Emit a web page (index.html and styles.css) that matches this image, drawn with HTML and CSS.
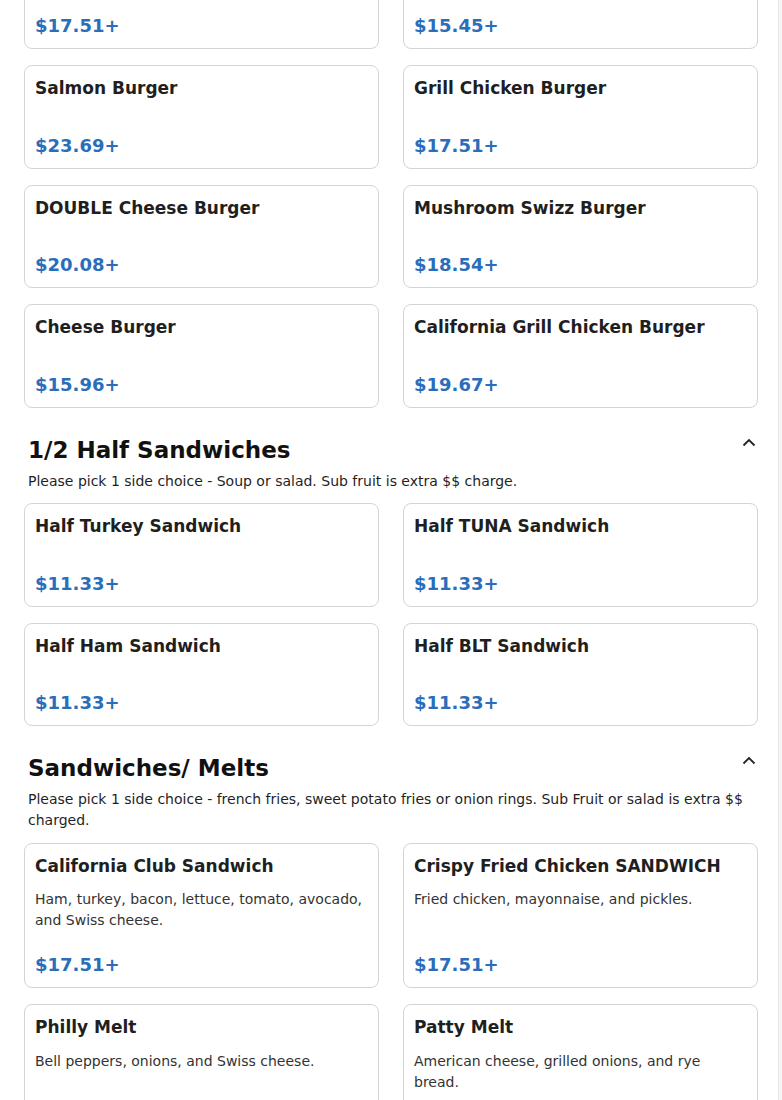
FILE: index.html
```html
<!DOCTYPE html>
<html>
<head>
  <title>Menu</title>
  <link rel="stylesheet" href="styles.css">
</head>
<body>
  <div class="page">
    <main class="menu">
      <!-- Burgers (scrolled partly out of view) -->
      <div class="item-grid first-grid">
        <div class="item-card">
          <div class="item-name">Bacon Burger</div>
          <div class="item-desc"></div>
          <div class="item-price">$17.51+</div>
        </div>
        <div class="item-card">
          <div class="item-name">Classic Burger</div>
          <div class="item-desc"></div>
          <div class="item-price">$15.45+</div>
        </div>
        <div class="item-card">
          <div class="item-name">Salmon Burger</div>
          <div class="item-desc"></div>
          <div class="item-price">$23.69+</div>
        </div>
        <div class="item-card">
          <div class="item-name">Grill Chicken Burger</div>
          <div class="item-desc"></div>
          <div class="item-price">$17.51+</div>
        </div>
        <div class="item-card">
          <div class="item-name">DOUBLE Cheese Burger</div>
          <div class="item-desc"></div>
          <div class="item-price">$20.08+</div>
        </div>
        <div class="item-card">
          <div class="item-name">Mushroom Swizz Burger</div>
          <div class="item-desc"></div>
          <div class="item-price">$18.54+</div>
        </div>
        <div class="item-card">
          <div class="item-name">Cheese Burger</div>
          <div class="item-desc"></div>
          <div class="item-price">$15.96+</div>
        </div>
        <div class="item-card">
          <div class="item-name">California Grill Chicken Burger</div>
          <div class="item-desc"></div>
          <div class="item-price">$19.67+</div>
        </div>
      </div>

      <section class="menu-section">
        <div class="section-head">
          <h2>1/2 Half Sandwiches</h2>
          <svg class="chevron" width="14" height="9" viewBox="0 0 14 9"><path d="M1.5 7.5 L7 2 L12.5 7.5" fill="none" stroke="#222" stroke-width="1.8"/></svg>
        </div>
        <p class="section-note">Please pick 1 side choice - Soup or salad. Sub fruit is extra $$ charge.</p>
        <div class="item-grid">
          <div class="item-card">
            <div class="item-name">Half Turkey Sandwich</div>
            <div class="item-desc"></div>
            <div class="item-price">$11.33+</div>
          </div>
          <div class="item-card">
            <div class="item-name">Half TUNA Sandwich</div>
            <div class="item-desc"></div>
            <div class="item-price">$11.33+</div>
          </div>
          <div class="item-card">
            <div class="item-name">Half Ham Sandwich</div>
            <div class="item-desc"></div>
            <div class="item-price">$11.33+</div>
          </div>
          <div class="item-card">
            <div class="item-name">Half BLT Sandwich</div>
            <div class="item-desc"></div>
            <div class="item-price">$11.33+</div>
          </div>
        </div>
      </section>

      <section class="menu-section">
        <div class="section-head">
          <h2>Sandwiches/ Melts</h2>
          <svg class="chevron" width="14" height="9" viewBox="0 0 14 9"><path d="M1.5 7.5 L7 2 L12.5 7.5" fill="none" stroke="#222" stroke-width="1.8"/></svg>
        </div>
        <p class="section-note">Please pick 1 side choice - french fries, sweet potato fries or onion rings. Sub Fruit or salad is extra $$ charged.</p>
        <div class="item-grid">
          <div class="item-card">
            <div class="item-name">California Club Sandwich</div>
            <div class="item-desc">Ham, turkey, bacon, lettuce, tomato, avocado, and Swiss cheese.</div>
            <div class="item-price">$17.51+</div>
          </div>
          <div class="item-card">
            <div class="item-name">Crispy Fried Chicken SANDWICH</div>
            <div class="item-desc">Fried chicken, mayonnaise, and pickles.</div>
            <div class="item-price">$17.51+</div>
          </div>
          <div class="item-card">
            <div class="item-name">Philly Melt</div>
            <div class="item-desc">Bell peppers, onions, and Swiss cheese.</div>
            <div class="item-price">$17.51+</div>
          </div>
          <div class="item-card">
            <div class="item-name">Patty Melt</div>
            <div class="item-desc">American cheese, grilled onions, and rye bread.</div>
            <div class="item-price">$17.51+</div>
          </div>
        </div>
      </section>
    </main>
    <aside class="side-strip"></aside>
  </div>
</body>
</html>
```

FILE: styles.css
```css
body {
  font-family: 'DejaVu Sans', Verdana, sans-serif;
  background-color: #fff;
  color: #1f1f1f;
  margin: 0;
  overflow: hidden;
}

.page {
  display: flex;
  min-height: 100vh;
}

.menu {
  width: 734px;
  padding: 0 20px 0 24px;
}

.side-strip {
  flex: 1;
  border-left: 1px solid #e6e6e6;
  background-color: #f6f6f6;
}

.first-grid {
  margin-top: -54.5px;
}

.item-grid {
  display: grid;
  grid-template-columns: 1fr 1fr;
  column-gap: 24px;
  row-gap: 16px;
}

.item-card {
  display: flex;
  flex-direction: column;
  border: 1px solid #d4d4d4;
  border-radius: 8px;
  padding: 10px 10px 9px;
  background-color: #fff;
}

.item-name {
  font-size: 17px;
  font-weight: bold;
  line-height: 25.5px;
  margin-bottom: 10px;
}

.item-desc {
  font-size: 14px;
  line-height: 21px;
  color: #333;
  margin-bottom: 20px;
}

.item-price {
  margin-top: auto;
  font-size: 18px;
  font-weight: bold;
  line-height: 27px;
  color: #2a6ebb;
}

.menu-section {
  margin-top: 25px;
}

.section-head {
  display: flex;
  justify-content: space-between;
  align-items: flex-start;
  padding: 0 2px 0 4px;
}

.section-head h2 {
  margin: 0;
  font-size: 23px;
  line-height: 35px;
  color: #111;
}

.chevron {
  margin-top: 5px;
}

.section-note {
  margin: 3px 0 11.5px;
  padding-left: 4px;
  font-size: 14px;
  line-height: 21px;
  color: #1f1f1f;
}
```
